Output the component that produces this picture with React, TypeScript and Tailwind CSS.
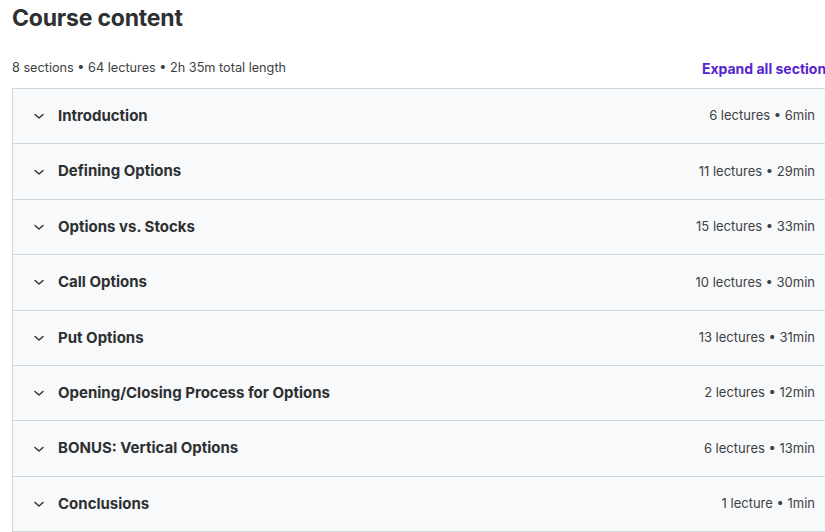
const sections = [
  { title: "Introduction", meta: "6 lectures • 6min" },
  { title: "Defining Options", meta: "11 lectures • 29min" },
  { title: "Options vs. Stocks", meta: "15 lectures • 33min" },
  { title: "Call Options", meta: "10 lectures • 30min" },
  { title: "Put Options", meta: "13 lectures • 31min" },
  { title: "Opening/Closing Process for Options", meta: "2 lectures • 12min" },
  { title: "BONUS: Vertical Options", meta: "6 lectures • 13min" },
  { title: "Conclusions", meta: "1 lecture • 1min" },
];

function Chevron() {
  return (
    <svg width="12" height="12" viewBox="0 0 12 12" className="shrink-0 text-[#2d2f31]">
      <polyline points="2,4.5 6,8 10,4.5" fill="none" stroke="currentColor" strokeWidth="1.4" strokeLinecap="round" strokeLinejoin="round" />
    </svg>
  );
}

export default function App() {
  return (
    <div className="w-[825px] h-[532px] overflow-hidden bg-white text-[#2d2f31]" style={{ fontFamily: "Inter, 'Noto Sans', sans-serif" }}>
      <div className="w-[822px] ml-3">
        <h2 className="text-[23px] font-bold leading-[36px] tracking-[-0.2px]">Course content</h2>
        <div className="flex items-center justify-between mt-[19px] h-[26px]">
          <span className="text-[12.7px] text-[#3e4143]">8 sections • 64 lectures • 2h 35m total length</span>
          <span className="text-[14px] font-bold text-[#5624d0] whitespace-nowrap">Expand all sections</span>
        </div>
        <div className="mt-[7px] border border-[#d1d7dc] border-b-0">
          {sections.map((s) => (
            <div key={s.title} className="flex items-center h-[55.4px] bg-[#f7f9fa] border-b border-[#d1d7dc] pl-[20px] pr-[18px]">
              <Chevron />
              <span className="ml-[13px] text-[15px] font-bold flex-1">{s.title}</span>
              <span className="text-[13px] text-[#3e4143]">{s.meta}</span>
            </div>
          ))}
        </div>
      </div>
    </div>
  );
}
